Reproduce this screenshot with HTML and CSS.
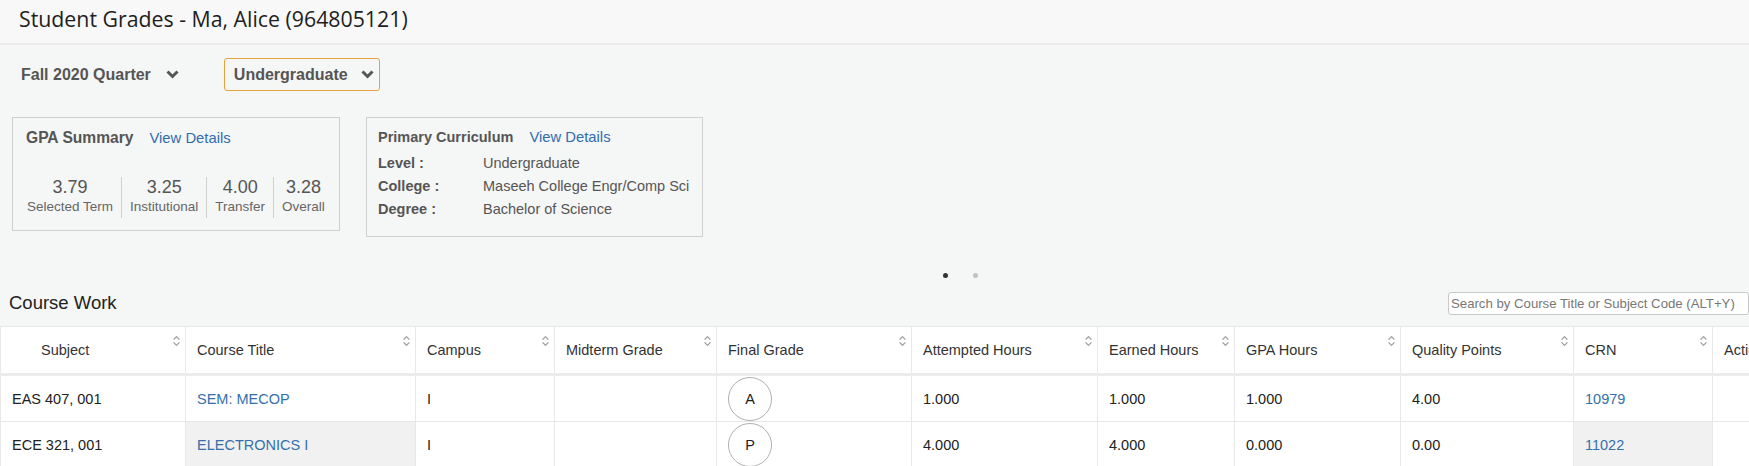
FILE: index.html
```html
<!DOCTYPE html>
<html lang="en">
<head>
<meta charset="utf-8">
<title>Student Grades</title>
<link rel="stylesheet" href="styles.css">
</head>
<body>
<header class="page-header">
  <h1 class="page-title">Student Grades - Ma, Alice (964805121)</h1>
</header>
<main class="page">
  <div class="filters">
    <div class="term-select">
      <span>Fall 2020 Quarter</span>
      <svg class="chev" width="13" height="9" viewBox="0 0 13 9"><polyline points="1.5,1.5 6.5,6.5 11.5,1.5" fill="none" stroke="#555" stroke-width="3"/></svg>
    </div>
    <div class="level-select">
      <span>Undergraduate</span>
      <svg class="chev" width="13" height="9" viewBox="0 0 13 9"><polyline points="1.5,1.5 6.5,6.5 11.5,1.5" fill="none" stroke="#555" stroke-width="3"/></svg>
    </div>
  </div>

  <section class="cards">
    <div class="card gpa-card">
      <div class="card-head">
        <span class="card-title gpa-title">GPA Summary</span>
        <a class="card-link" href="#">View Details</a>
      </div>
      <div class="stats">
        <div class="stat"><div class="stat-num">3.79</div><div class="stat-label">Selected Term</div></div>
        <div class="stat"><div class="stat-num">3.25</div><div class="stat-label">Institutional</div></div>
        <div class="stat"><div class="stat-num">4.00</div><div class="stat-label">Transfer</div></div>
        <div class="stat"><div class="stat-num">3.28</div><div class="stat-label">Overall</div></div>
      </div>
    </div>
    <div class="card curr-card">
      <div class="card-head">
        <span class="card-title curr-title">Primary Curriculum</span>
        <a class="card-link" href="#">View Details</a>
      </div>
      <div class="curr-row"><span class="curr-label">Level :</span><span class="curr-value">Undergraduate</span></div>
      <div class="curr-row"><span class="curr-label">College :</span><span class="curr-value">Maseeh College Engr/Comp Sci</span></div>
      <div class="curr-row"><span class="curr-label">Degree :</span><span class="curr-value">Bachelor of Science</span></div>
    </div>
  </section>

  <div class="dots"><span class="dot active"></span><span class="dot"></span></div>

  <div class="cw-head">
    <h2 class="cw-title">Course Work</h2>
    <input class="search" type="text" placeholder="Search by Course Title or Subject Code (ALT+Y)">
  </div>

  <table class="grades">
    <colgroup>
      <col class="w-subject"><col class="w-title"><col class="w-campus"><col class="w-mid"><col class="w-final"><col class="w-att"><col class="w-earned"><col class="w-gpa"><col class="w-qp"><col class="w-crn"><col class="w-action">
    </colgroup>
    <thead>
      <tr>
        <th><div class="th-inner th-subject"><span>Subject</span><svg class="sort" width="7" height="10" viewBox="0 0 7 10"><polyline points="0.6,3.6 3.5,0.7 6.4,3.6" fill="none" stroke="#999" stroke-width="1.2"/><polyline points="0.6,6.4 3.5,9.3 6.4,6.4" fill="none" stroke="#999" stroke-width="1.2"/></svg></div></th>
        <th><div class="th-inner"><span>Course Title</span><svg class="sort" width="7" height="10" viewBox="0 0 7 10"><polyline points="0.6,3.6 3.5,0.7 6.4,3.6" fill="none" stroke="#999" stroke-width="1.2"/><polyline points="0.6,6.4 3.5,9.3 6.4,6.4" fill="none" stroke="#999" stroke-width="1.2"/></svg></div></th>
        <th><div class="th-inner"><span>Campus</span><svg class="sort" width="7" height="10" viewBox="0 0 7 10"><polyline points="0.6,3.6 3.5,0.7 6.4,3.6" fill="none" stroke="#999" stroke-width="1.2"/><polyline points="0.6,6.4 3.5,9.3 6.4,6.4" fill="none" stroke="#999" stroke-width="1.2"/></svg></div></th>
        <th><div class="th-inner"><span>Midterm Grade</span><svg class="sort" width="7" height="10" viewBox="0 0 7 10"><polyline points="0.6,3.6 3.5,0.7 6.4,3.6" fill="none" stroke="#999" stroke-width="1.2"/><polyline points="0.6,6.4 3.5,9.3 6.4,6.4" fill="none" stroke="#999" stroke-width="1.2"/></svg></div></th>
        <th><div class="th-inner"><span>Final Grade</span><svg class="sort" width="7" height="10" viewBox="0 0 7 10"><polyline points="0.6,3.6 3.5,0.7 6.4,3.6" fill="none" stroke="#999" stroke-width="1.2"/><polyline points="0.6,6.4 3.5,9.3 6.4,6.4" fill="none" stroke="#999" stroke-width="1.2"/></svg></div></th>
        <th><div class="th-inner"><span>Attempted Hours</span><svg class="sort" width="7" height="10" viewBox="0 0 7 10"><polyline points="0.6,3.6 3.5,0.7 6.4,3.6" fill="none" stroke="#999" stroke-width="1.2"/><polyline points="0.6,6.4 3.5,9.3 6.4,6.4" fill="none" stroke="#999" stroke-width="1.2"/></svg></div></th>
        <th><div class="th-inner"><span>Earned Hours</span><svg class="sort" width="7" height="10" viewBox="0 0 7 10"><polyline points="0.6,3.6 3.5,0.7 6.4,3.6" fill="none" stroke="#999" stroke-width="1.2"/><polyline points="0.6,6.4 3.5,9.3 6.4,6.4" fill="none" stroke="#999" stroke-width="1.2"/></svg></div></th>
        <th><div class="th-inner"><span>GPA Hours</span><svg class="sort" width="7" height="10" viewBox="0 0 7 10"><polyline points="0.6,3.6 3.5,0.7 6.4,3.6" fill="none" stroke="#999" stroke-width="1.2"/><polyline points="0.6,6.4 3.5,9.3 6.4,6.4" fill="none" stroke="#999" stroke-width="1.2"/></svg></div></th>
        <th><div class="th-inner"><span>Quality Points</span><svg class="sort" width="7" height="10" viewBox="0 0 7 10"><polyline points="0.6,3.6 3.5,0.7 6.4,3.6" fill="none" stroke="#999" stroke-width="1.2"/><polyline points="0.6,6.4 3.5,9.3 6.4,6.4" fill="none" stroke="#999" stroke-width="1.2"/></svg></div></th>
        <th><div class="th-inner"><span>CRN</span><svg class="sort" width="7" height="10" viewBox="0 0 7 10"><polyline points="0.6,3.6 3.5,0.7 6.4,3.6" fill="none" stroke="#999" stroke-width="1.2"/><polyline points="0.6,6.4 3.5,9.3 6.4,6.4" fill="none" stroke="#999" stroke-width="1.2"/></svg></div></th>
        <th><div class="th-inner"><span>Action</span></div></th>
      </tr>
    </thead>
    <tbody>
      <tr>
        <td>EAS 407, 001</td>
        <td><a class="link" href="#">SEM: MECOP</a></td>
        <td>I</td>
        <td></td>
        <td><span class="grade">A</span></td>
        <td>1.000</td>
        <td>1.000</td>
        <td>1.000</td>
        <td>4.00</td>
        <td><a class="link" href="#">10979</a></td>
        <td></td>
      </tr>
      <tr>
        <td>ECE 321, 001</td>
        <td class="hl"><a class="link" href="#">ELECTRONICS I</a></td>
        <td>I</td>
        <td></td>
        <td><span class="grade">P</span></td>
        <td>4.000</td>
        <td>4.000</td>
        <td>0.000</td>
        <td>0.00</td>
        <td class="hl"><a class="link" href="#">11022</a></td>
        <td></td>
      </tr>
    </tbody>
  </table>
</main>
</body>
</html>
```

FILE: styles.css
```css
html, body {
  margin: 0;
  padding: 0;
  overflow: hidden;
}

body {
  background: #f5f6f6;
  font-family: "Liberation Sans", Arial, sans-serif;
  color: #222;
}

/* ---------- page header ---------- */
.page-header {
  box-sizing: content-box;
  height: 39px;
  padding: 4px 0 0 19px;
  background: #f8f8f8;
  border-bottom: 2px solid #ebebeb;
}

.page-title {
  margin: 0;
  font-family: "Open Sans", "Liberation Sans", sans-serif;
  font-weight: 400;
  font-size: 21.3px;
  line-height: 29px;
  color: #1e1e1e;
}

/* ---------- filters ---------- */
.filters {
  display: flex;
  align-items: center;
  margin-top: 13px;
  padding-left: 21px;
  height: 33px;
  font-size: 16px;
  font-weight: 700;
  color: #555;
}

.term-select {
  display: flex;
  align-items: center;
  gap: 15px;
}

.level-select {
  display: flex;
  align-items: center;
  gap: 13px;
  margin-left: 45px;
  height: 33px;
  box-sizing: border-box;
  padding: 0 5px 0 9px;
  border: 1px solid #e8a23c;
  border-radius: 3px;
}

.chev {
  display: block;
}

/* ---------- cards ---------- */
.cards {
  display: flex;
  align-items: flex-start;
  gap: 26px;
  margin-top: 26px;
  padding-left: 12px;
}

.card {
  border: 1px solid #cfcfcf;
  box-sizing: border-box;
  color: #555;
}

.gpa-card {
  width: 328px;
  height: 114px;
  padding: 10px 0 0 6px;
}

.curr-card {
  width: 337px;
  height: 120px;
  padding: 9px 0 0 11px;
}

.card-head {
  display: flex;
  align-items: baseline;
  line-height: 20px;
}

.gpa-card .card-head {
  padding-left: 7px;
}

.card-title {
  font-weight: 700;
  color: #555;
}

.gpa-title {
  font-size: 15.6px;
}

.curr-title {
  font-size: 14.5px;
}

.card-link {
  margin-left: 16px;
  font-size: 14.8px;
  color: #2f6db0;
  text-decoration: none;
}

.stats {
  display: flex;
  margin-top: 29px;
}

.stat {
  padding: 0 8px;
  text-align: center;
  border-left: 1px solid #cfcfcf;
}

.stat:first-child {
  border-left: none;
}

.stat-num {
  font-size: 18px;
  line-height: 20px;
  color: #555;
}

.stat-label {
  font-size: 13.5px;
  line-height: 19px;
  padding-bottom: 2px;
  color: #666;
}

.curr-card .card-head {
  margin-bottom: 5px;
}

.curr-row {
  display: flex;
  font-size: 14.5px;
  line-height: 23px;
}

.curr-label {
  width: 105px;
  font-weight: 700;
  color: #555;
}

.curr-value {
  color: #555;
}

/* ---------- carousel dots ---------- */
.dots {
  display: flex;
  justify-content: center;
  gap: 25px;
  width: 1920px;
  margin-top: 36px;
  height: 5px;
}

.dot {
  width: 5px;
  height: 5px;
  border-radius: 50%;
  background: #c2c2c2;
}

.dot.active {
  background: #333;
}

/* ---------- course work header ---------- */
.cw-head {
  display: flex;
  align-items: flex-start;
  justify-content: space-between;
  margin-top: 13px;
  padding-left: 9px;
  height: 24px;
}

.cw-title {
  margin: 0;
  font-weight: 400;
  font-size: 18.5px;
  line-height: 23px;
  color: #222;
}

.search {
  margin-top: 1px;
  width: 301px;
  height: 23px;
  box-sizing: border-box;
  padding: 0 0 0 2px;
  border: 1px solid #c8c8c8;
  border-radius: 3px;
  background: #fff;
  font-family: "Liberation Sans", Arial, sans-serif;
  font-size: 13.2px;
  color: #333;
  outline: none;
}

.search::placeholder {
  color: #777;
}

/* ---------- table ---------- */
.grades {
  margin-top: 11px;
  border-collapse: collapse;
  table-layout: fixed;
  width: 1832px;
  background: #fff;
  font-size: 14.5px;
  color: #222;
}

.w-subject { width: 185px; }
.w-title { width: 230px; }
.w-campus { width: 139px; }
.w-mid { width: 162px; }
.w-final { width: 195px; }
.w-att { width: 186px; }
.w-earned { width: 137px; }
.w-gpa { width: 166px; }
.w-qp { width: 173px; }
.w-crn { width: 139px; }
.w-action { width: 120px; }

.grades th,
.grades td {
  border: 1px solid #e8e8e8;
  text-align: left;
}

.grades th {
  padding: 0;
  height: 46px;
  font-weight: 400;
  color: #333;
  border-bottom: 3px solid #ebebeb;
}

.th-inner {
  display: flex;
  align-items: center;
  height: 46px;
  padding-left: 11px;
}

.th-subject {
  padding-left: 40px;
}

.sort {
  align-self: flex-start;
  margin: 9px 5px 0 auto;
  flex-shrink: 0;
}

.grades td {
  height: 45px;
  padding: 0 11px;
  vertical-align: middle;
  white-space: nowrap;
}

.grades td.hl {
  background: #f1f1f1;
}

.link {
  color: #3570ac;
  text-decoration: none;
}

.grade {
  display: flex;
  align-items: center;
  justify-content: center;
  width: 44px;
  height: 44px;
  border: 1px solid #b0b0b0;
  border-radius: 50%;
  box-sizing: border-box;
  color: #222;
}
```
